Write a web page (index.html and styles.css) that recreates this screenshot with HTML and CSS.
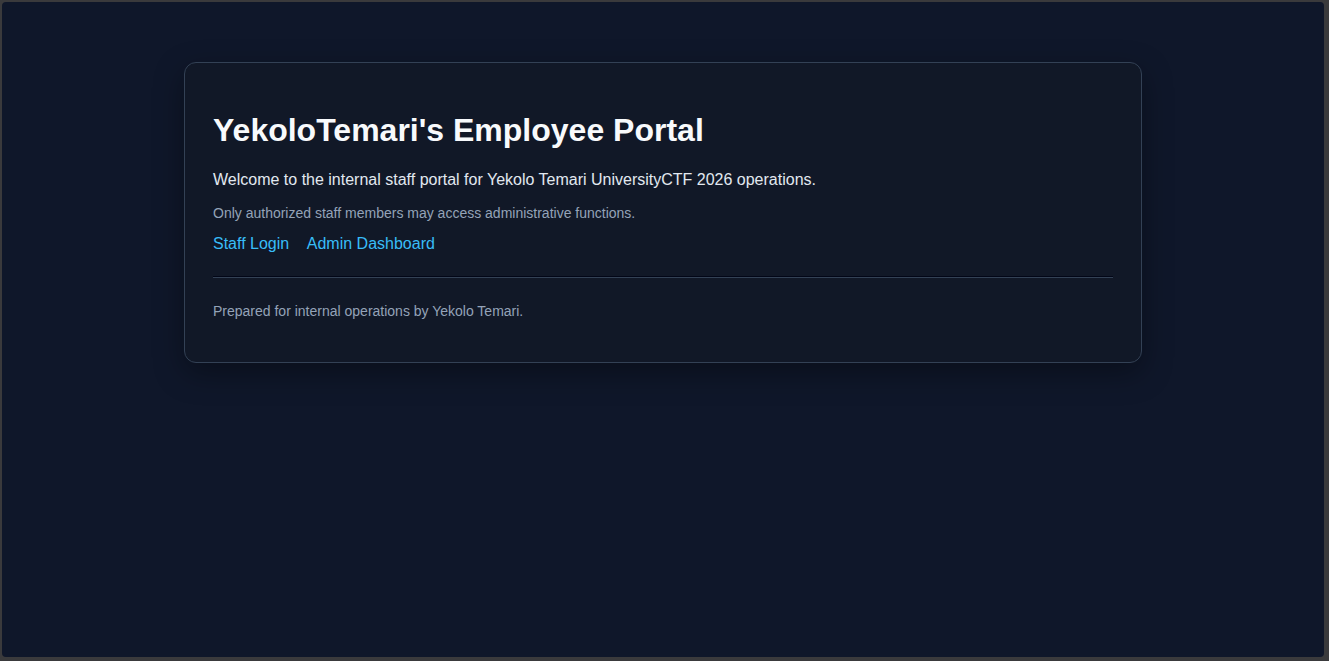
FILE: index.html
```html
<!DOCTYPE html>
<html lang="en">
<head>
    <meta charset="UTF-8">
    <meta name="viewport" content="width=device-width, initial-scale=1.0">
    <title>YekoloTemari's Employee Portal</title>
    <link rel="stylesheet" href="styles.css">
</head>
<body>
    <div class="screen">
        <div class="card">
            <h1>YekoloTemari's Employee Portal</h1>
            <p class="lead">Welcome to the internal staff portal for Yekolo Temari UniversityCTF 2026 operations.</p>
            <p class="muted">Only authorized staff members may access administrative functions.</p>
            <p class="links">
                <a href="#">Staff Login</a>
                <a href="#">Admin Dashboard</a>
            </p>
            <hr>
            <p class="muted">Prepared for internal operations by Yekolo Temari.</p>
        </div>
    </div>
</body>
</html>
```

FILE: styles.css
```css
html, body {
    height: 100%;
}
body {
    margin: 0;
    background: #3a3a3c;
    font-family: "Liberation Sans", Arial, sans-serif;
    padding: 2px 5px 4px 2px;
    box-sizing: border-box;
}
.screen {
    height: 100%;
    background: #0f172a;
    border-radius: 4px;
    padding-top: 60px;
    box-sizing: border-box;
}
.card {
    max-width: 900px;
    margin: 0 auto;
    background: #111827;
    border: 1px solid #334155;
    border-radius: 12px;
    padding: 28px 28px 29px;
    box-shadow: 0 10px 30px rgba(0,0,0,0.35);
}
h1 {
    color: #f8fafc;
    font-size: 32px;
    margin: 21px 0 22px;
}
.lead {
    color: #e2e8f0;
    font-size: 16px;
    margin: 16px 0;
}
.muted {
    color: #94a3b8;
    font-size: 14px;
    margin: 14px 0;
}
.links {
    font-size: 16px;
    margin: 14px 0 0;
}
.links a {
    color: #38bdf8;
    text-decoration: none;
    margin-right: 14px;
}
hr {
    border: none;
    border-top: 1px solid #020617;
    border-bottom: 1px solid #334155;
    margin: 23px 0 25px;
}
```
